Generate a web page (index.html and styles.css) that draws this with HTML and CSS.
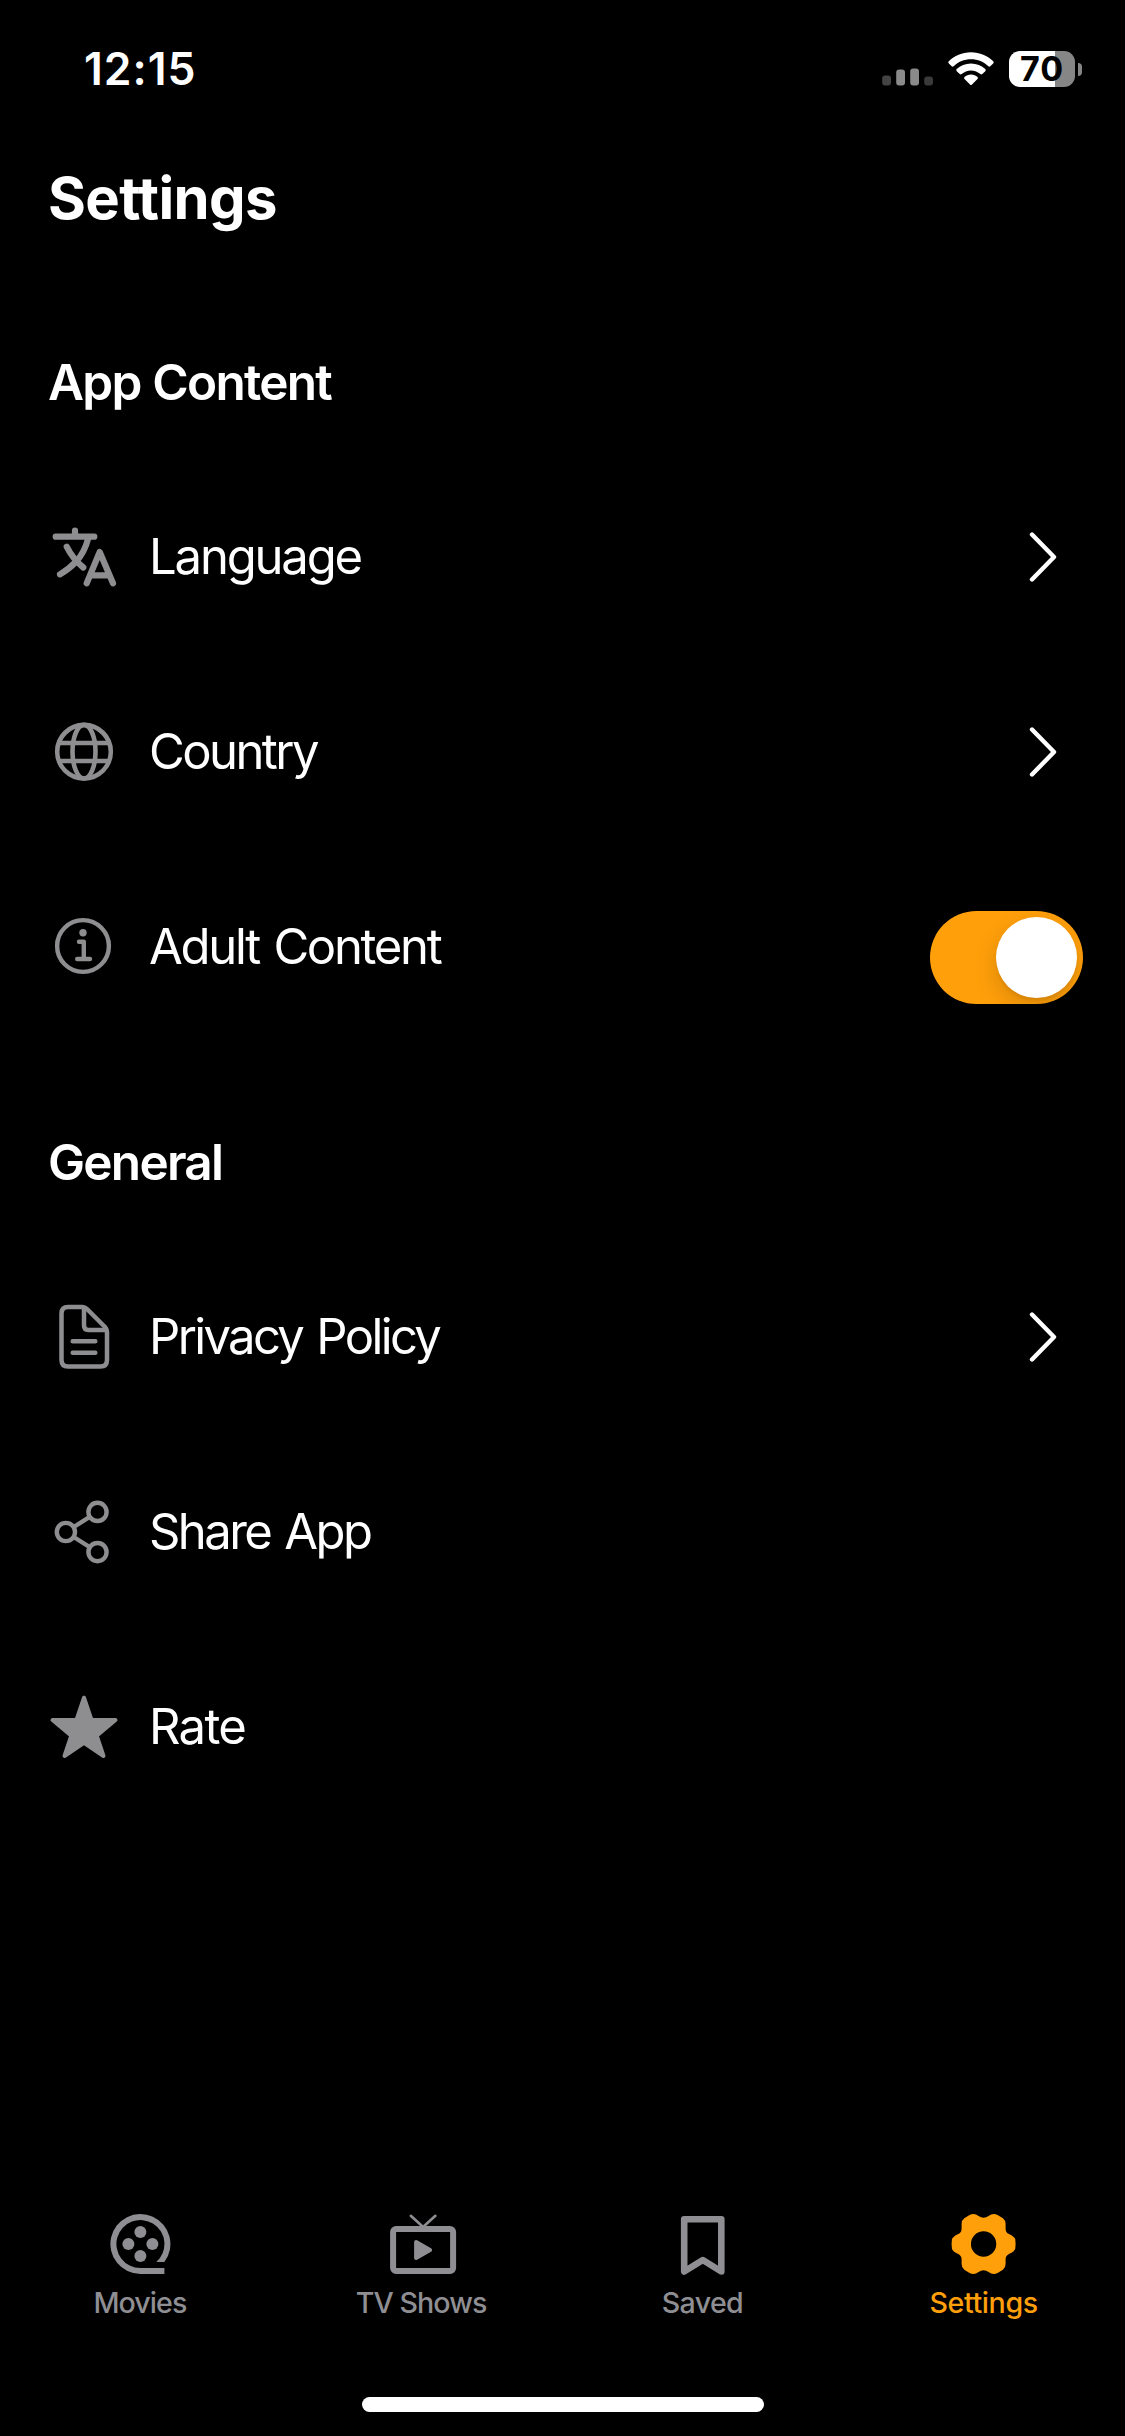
FILE: index.html
```
<!DOCTYPE html>
<html lang="en">
<head>
<meta charset="utf-8">
<title>Settings</title>
<link rel="stylesheet" href="styles.css">
</head>
<body>
<div class="screen">
  <header class="status-bar">
    <span class="time">12:15</span>
    <div class="status-icons">
      <svg class="signal" width="52" height="20" viewBox="0 0 52 20">
        <rect x="0.2" y="9.5" width="8.8" height="10" rx="3" fill="#444"/>
        <rect x="14.2" y="3.5" width="8.8" height="16" rx="3" fill="#8a8a8a"/>
        <rect x="28.2" y="2.5" width="8.8" height="17" rx="3" fill="#8a8a8a"/>
        <rect x="42.2" y="10.5" width="8.8" height="9" rx="3" fill="#3a3a3a"/>
      </svg>
      <svg class="wifi" width="46" height="34" viewBox="0 0 46 34" fill="#fff">
        <path d="M23 0.3 C31.8 0.3 39.6 3.8 45.2 9.3 Q46.2 10.3 45.2 11.4 L42.3 14.3 Q41.4 15.1 40.4 14.2 C35.8 9.8 29.7 7.2 23 7.2 C16.3 7.2 10.2 9.8 5.6 14.2 Q4.6 15.1 3.7 14.3 L0.8 11.4 Q-0.2 10.3 0.8 9.3 C6.4 3.8 14.2 0.3 23 0.3 Z"/>
        <path d="M23 11.4 C28.6 11.4 33.6 13.6 37.3 17.1 Q38.3 18.1 37.3 19.2 L34.3 22.1 Q33.4 22.9 32.4 22.1 C29.9 19.8 26.6 18.4 23 18.4 C19.4 18.4 16.1 19.8 13.6 22.1 Q12.6 22.9 11.7 22.1 L8.7 19.2 Q7.7 18.1 8.7 17.1 C12.4 13.6 17.4 11.4 23 11.4 Z"/>
        <path d="M23 22.6 C25.7 22.6 27.8 23.5 29.5 25 Q30.5 26 29.5 27 L24 32.5 Q23 33.5 22 32.5 L16.5 27 Q15.5 26 16.5 25 C18.2 23.5 20.3 22.6 23 22.6 Z"/>
      </svg>
      <div class="battery">
        <div class="battery-body">70</div>
        <div class="battery-cap"></div>
      </div>
    </div>
  </header>

  <h1 class="title">Settings</h1>

  <main class="content">
    <section class="group">
      <h2 class="group-title">App Content</h2>
      <div class="row">
        <svg class="icon" viewBox="0 0 72 72">
          <g stroke-width="6.2" stroke-linecap="round" stroke-linejoin="round">
            <path d="M7.7 15.7H46.3M27 9.7v6"/>
            <path d="M40.3 17C38 26 34 34.5 27.7 41C23 46 17.5 50 12 53.3"/>
            <path d="M18.7 25.7C22.5 33.5 28 40.5 35.3 46.5"/>
            <path d="M38.7 62.3L51.7 31L65 62.3M43.5 54.3H60"/>
          </g>
        </svg>
        <span class="label label-language">Language</span>
        <svg class="chevron" viewBox="0 0 28 50"><path d="M3 2.5L25 25L3 47.5"/></svg>
      </div>
      <div class="row">
        <svg class="icon" viewBox="0 0 72 72">
          <g stroke-width="4.6">
            <circle cx="36" cy="35.7" r="26.8"/>
            <ellipse cx="36" cy="35.7" rx="11.5" ry="26.8"/>
            <path d="M10.5 27H61.5M10.500 45H61.5"/>
          </g>
        </svg>
        <span class="label label-country">Country</span>
        <svg class="chevron" viewBox="0 0 28 50"><path d="M3 2.5L25 25L3 47.5"/></svg>
      </div>
      <div class="row">
        <svg class="icon" viewBox="0 0 72 72">
          <g stroke-width="4.4" stroke-linecap="round" stroke-linejoin="round">
            <circle cx="35" cy="35" r="25.9"/>
            <path d="M31 30.7h4.8v17M29.2 48h12.8"/>
          </g>
          <circle class="solid" cx="35" cy="21.7" r="3.7"/>
        </svg>
        <span class="label label-adult">Adult Content</span>
        <div class="toggle"><div class="knob"></div></div>
      </div>
    </section>

    <section class="group">
      <h2 class="group-title">General</h2>
      <div class="row">
        <svg class="icon" viewBox="0 0 72 72">
          <g stroke-width="4.5" stroke-linecap="round" stroke-linejoin="round">
            <path d="M20 6H34.5Q37 6 39 8L57 26Q59 28 59 30.5V59Q59 65.500 52.5 65.5H20Q13.5 65.5 13.5 59V12.5Q13.5 6 20 6Z"/>
            <path d="M36 7V24.5Q36 29 40.500 29H58"/>
            <path d="M24.7 40.3H47.3M24.7 51.7H47.3"/>
          </g>
        </svg>
        <span class="label label-privacy">Privacy Policy</span>
        <svg class="chevron" viewBox="0 0 28 50"><path d="M3 2.5L25 25L3 47.5"/></svg>
      </div>
      <div class="row">
        <svg class="icon" viewBox="0 0 72 72">
          <g stroke-width="4.4">
            <circle cx="17.9" cy="36" r="9.1"/>
            <circle cx="49.5" cy="15.9" r="9.1"/>
            <circle cx="49.5" cy="56.1" r="9.1"/>
            <path d="M25.7 31L41.7 20.9M25.7 41L41.7 51.1"/>
          </g>
        </svg>
        <span class="label label-share">Share App</span>
      </div>
      <div class="row">
        <svg class="icon" viewBox="0 0 72 72">
          <path class="solid" stroke="currentColor" stroke-width="4" stroke-linejoin="round" d="M36 6.7L43.5 29H67.5L48.7 44.6L55.5 65L36 51.8L16.5 65L23.3 44.6L4.5 29H28.5Z"/>
        </svg>
        <span class="label label-rate">Rate</span>
      </div>
    </section>
  </main>

  <nav class="tab-bar">
    <div class="tab">
      <svg class="tab-icon" viewBox="0 0 72 72">
        <path class="solid" d="M35.4 66A30 30 0 1 1 59.4 54H51.3A24 24 0 1 0 35.4 60H59.4V66Z"/>
        <g class="solid">
          <circle cx="35.4" cy="24" r="6"/><circle cx="35.4" cy="48" r="6"/>
          <circle cx="23.4" cy="36" r="6"/><circle cx="47.4" cy="36" r="6"/>
        </g>
      </svg>
      <span class="tab-label">Movies</span>
    </div>
    <div class="tab">
      <svg class="tab-icon" viewBox="0 0 72 72">
        <rect x="7.1" y="21" width="60" height="42" rx="3" stroke-width="6"/>
        <path d="M24.8 7.8L37.1 19L49.4 7.8" stroke-width="2.6" stroke-linecap="round"/>
        <path class="solid" stroke="currentColor" stroke-width="4" stroke-linejoin="round" d="M30.1 34L44.1 42L30.1 50Z"/>
      </svg>
      <span class="tab-label">TV Shows</span>
    </div>
    <div class="tab">
      <svg class="tab-icon" viewBox="0 0 72 72">
        <path d="M17.2 63.5V11.3H54.3V63.5L35.8 52Z" stroke-width="6.6" stroke-linejoin="round"/>
      </svg>
      <span class="tab-label tab-label-saved">Saved</span>
    </div>
    <div class="tab tab-active">
      <svg class="tab-icon" viewBox="-106.8 -108 216 216">
        <path class="solid" fill-rule="evenodd" d="M-15 -84Q0 -74 15 -84Q28 -94 42 -87L58 -77Q66 -71 66 -60V-46Q66 -35 76 -30Q93 -22 95 -14Q97 0 95 14Q93 22 76 30Q66 35 66 46V60Q66 71 58 77L42 87Q28 94 15 84Q0 74 -15 84Q-28 94 -42 87L-58 77Q-66 71 -66 60V46Q-66 35 -76 30Q-93 22 -95 14Q-97 0 -95 -14Q-93 -22 -76 -30Q-66 -35 -66 -46V-60Q-66 -71 -58 -77L-42 -87Q-28 -94 -15 -84ZM38 0A38 38 0 1 0 -38 0A38 38 0 1 0 38 0Z"/>
      </svg>
      <span class="tab-label tab-label-settings">Settings</span>
    </div>
  </nav>
  <div class="home-indicator"></div>
</div>
</body>
</html>
```
FILE: styles.css
```
* { box-sizing: border-box; }

body {
  margin: 0;
  background: #000;
  color: #fff;
  font-family: Inter, "Liberation Sans", sans-serif;
}

.screen {
  display: flex;
  flex-direction: column;
  width: 1125px;
  height: 2436px;
  overflow: hidden;
}

/* Status bar */
.status-bar {
  display: flex;
  align-items: center;
  justify-content: space-between;
  height: 138px;
  padding: 0 43px 0 84px;
}
.time {
  font-size: 44.5px;
  font-weight: 600;
  letter-spacing: 1px;
}
.status-icons {
  display: flex;
  align-items: center;
}
.signal { margin: 13px 14px 0 0; }
.wifi { margin-right: 15px; }
.battery {
  display: flex;
  align-items: center;
  gap: 3px;
}
.battery-body {
  width: 66px;
  height: 36px;
  padding-left: 11px;
  border-radius: 11px;
  background: linear-gradient(90deg, #fff 70%, #868686 70%);
  color: #000;
  font-size: 34px;
  font-weight: 700;
  line-height: 36px;
  letter-spacing: 1px;
}
.battery-cap {
  width: 4px;
  height: 13px;
  border-radius: 0 4px 4px 0;
  background: #868686;
}

/* Headings */
.title {
  margin: 0;
  padding-left: 48px;
  font-size: 58px;
  font-weight: 700;
  line-height: 120px;
  letter-spacing: -0.63px;
}
.content {
  display: flex;
  flex-direction: column;
  gap: 40px;
  padding-top: 47px;
}
.group-title {
  margin: 0;
  padding-left: 48px;
  font-size: 49.5px;
  font-weight: 600;
  line-height: 155px;
  letter-spacing: -1.75px;
  word-spacing: 1px;
}

/* Rows */
.row {
  display: flex;
  align-items: center;
  height: 195px;
  padding: 0 42px 2px 48px;
}
.icon {
  width: 72px;
  height: 72px;
  margin-right: 29px;
}
.icon,
.tab-icon {
  flex: none;
  fill: none;
  stroke: currentColor;
}
.icon { color: #8e8e90; }
.solid { fill: currentColor; }
circle.solid,
path.solid:not([stroke]),
g.solid { stroke: none; }
.label {
  flex: 1;
  font-size: 49px;
  line-height: 60px;
}
.label-language { letter-spacing: -2.17px; }
.label-country { letter-spacing: -2.57px; }
.label-adult { letter-spacing: -2.3px; word-spacing: 3px; }
.label-privacy { letter-spacing: -2.65px; word-spacing: 3px; }
.label-share { letter-spacing: -2.6px; word-spacing: 3px; }
.label-rate { letter-spacing: -1.7px; }
.chevron {
  width: 28px;
  height: 50px;
  margin-right: 26px;
  fill: none;
  stroke: #fff;
  stroke-width: 4.4;
  stroke-linecap: round;
  stroke-linejoin: round;
}
.toggle {
  display: flex;
  justify-content: flex-end;
  width: 153px;
  height: 93px;
  margin-top: 22px;
  padding: 6px;
  border-radius: 47px;
  background: #ff9f0a;
  overflow: hidden;
}
.knob {
  width: 81px;
  height: 81px;
  border-radius: 50%;
  background: #fff;
  box-shadow: 0 9px 24px rgba(0, 0, 0, 0.15), 0 3px 3px rgba(0, 0, 0, 0.06);
}

/* Tab bar */
.tab-bar {
  display: grid;
  grid-template-columns: repeat(4, 1fr);
  margin-top: auto;
  color: #8e8e93;
}
.tab {
  display: flex;
  flex-direction: column;
  align-items: center;
}
.tab-active { color: #ff9f0a; }
.tab-icon {
  width: 72px;
  height: 72px;
}
.tab-label {
  padding-right: 1.5px;
  font-size: 28.6px;
  font-weight: 500;
  line-height: 45px;
  letter-spacing: -0.95px;
}
.tab-label-saved { letter-spacing: -0.65px; }
.tab-label-settings { letter-spacing: -0.4px; }
.home-indicator {
  width: 402px;
  height: 15px;
  margin: 72px auto 24px;
  border-radius: 8px;
  background: #fff;
}
```
